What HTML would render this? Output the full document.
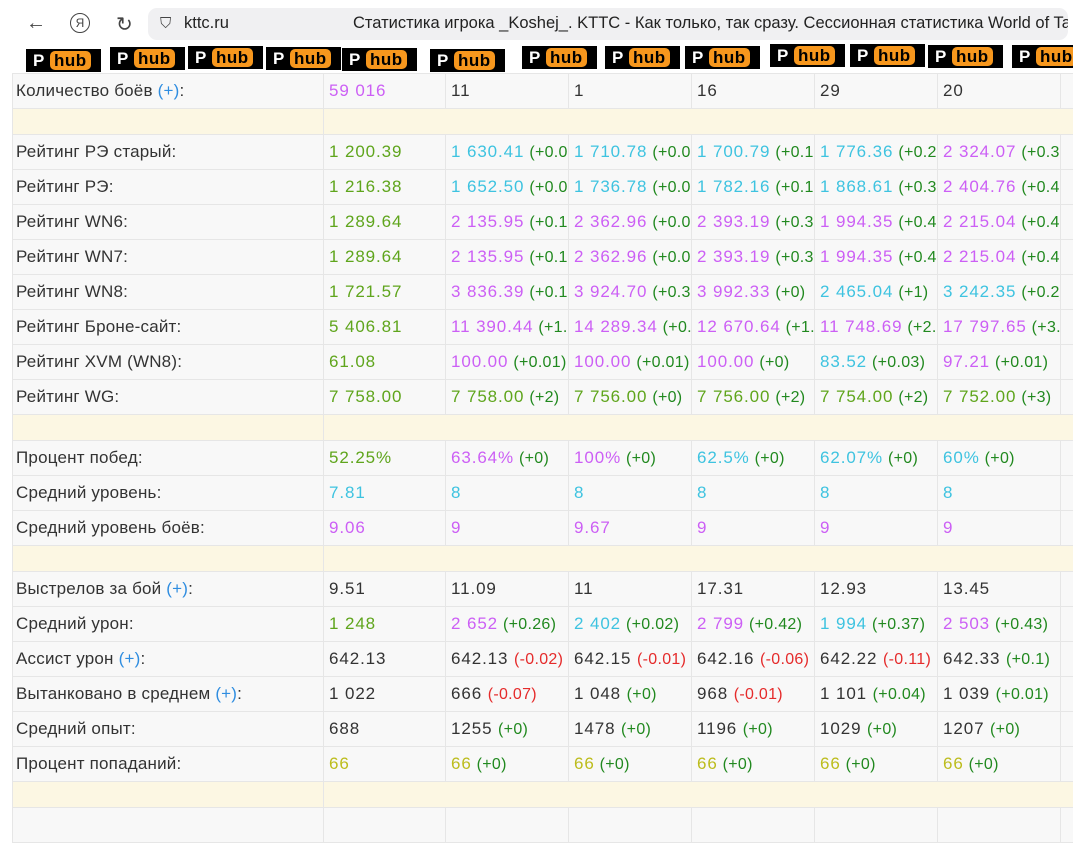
<!DOCTYPE html>
<html><head><meta charset="utf-8"><style>
body{margin:0;width:1073px;height:814px;overflow:hidden;background:#fff;font-family:"Liberation Sans",sans-serif;position:relative}
.bar{position:absolute;left:148px;top:8px;width:920px;height:32px;background:#f0f0f2;border-radius:9px}
.ic{position:absolute;top:12px;font-size:20px;color:#444}
.url{position:absolute;left:184px;top:14px;font-size:16.5px;color:#222}
.title{position:absolute;left:353px;top:14px;font-size:16.5px;color:#222;white-space:nowrap;width:715px;overflow:hidden}
.ph{position:absolute;background:#000;height:23px;width:75px;font:bold 17px "Liberation Sans",sans-serif;color:#fff}
.ph b{position:absolute;left:7px;top:2px}
.ph i{position:absolute;left:24px;top:2px;font-style:normal;background:#f7971d;color:#000;border-radius:5px;padding:0 4px;line-height:19px;letter-spacing:0.5px}
table{position:absolute;left:12px;top:73px;border-collapse:collapse;table-layout:fixed;width:1061px}
td{height:34px;border:1px solid #e6e6e6;padding:0 0 0 5px;font-size:17px;color:#333;white-space:nowrap;overflow:hidden;background:#f8f8f8;letter-spacing:0.2px}
td:first-child{padding-left:3px}
tr.e td{height:25px;background:#fcf7e3}
.g,.c,.p,.y{letter-spacing:0.9px}
td.n{letter-spacing:0.9px}
.g{color:#5fa51c}.c{color:#3ec3e0}.p{color:#cc5ff5}.y{color:#bcbc1c}.d{color:#21891f;font-size:16px;letter-spacing:0.3px}.r{color:#e52b2b;font-size:16px;letter-spacing:0.3px}.b{color:#2f8de0}
</style></head><body>
<div class="ic" style="left:26px">←</div>
<div class="ic" style="left:70px;top:13px;border:1.5px solid #444;border-radius:50%;width:18px;height:18px;line-height:18px;text-align:center;font-size:12px">Я</div>
<div class="ic" style="left:116px">↻</div>
<div class="bar"></div>
<div class="ic" style="left:160px;font-size:15px;top:15px">⛉</div>
<div class="url">kttc.ru</div>
<div class="title">Статистика игрока _Koshej_. KTTC - Как только, так сразу. Сессионная статистика World of Tanks</div>
<div class="ph" style="left:26px;top:49px"><b>P</b><i>hub</i></div>
<div class="ph" style="left:110px;top:47px"><b>P</b><i>hub</i></div>
<div class="ph" style="left:188px;top:46px"><b>P</b><i>hub</i></div>
<div class="ph" style="left:266px;top:47px"><b>P</b><i>hub</i></div>
<div class="ph" style="left:342px;top:48px"><b>P</b><i>hub</i></div>
<div class="ph" style="left:430px;top:49px"><b>P</b><i>hub</i></div>
<div class="ph" style="left:522px;top:46px"><b>P</b><i>hub</i></div>
<div class="ph" style="left:605px;top:46px"><b>P</b><i>hub</i></div>
<div class="ph" style="left:685px;top:46px"><b>P</b><i>hub</i></div>
<div class="ph" style="left:770px;top:44px"><b>P</b><i>hub</i></div>
<div class="ph" style="left:850px;top:44px"><b>P</b><i>hub</i></div>
<div class="ph" style="left:928px;top:45px"><b>P</b><i>hub</i></div>
<div class="ph" style="left:1012px;top:45px"><b>P</b><i>hub</i></div>
<table>
<colgroup><col style="width:311px"><col style="width:122px"><col style="width:123px"><col style="width:123px"><col style="width:123px"><col style="width:123px"><col style="width:123px"><col style="width:13px"></colgroup>
<tr><td>Количество боёв <span class="b">(+)</span>:</td><td class="p">59 016</td><td class="n">11</td><td class="n">1</td><td class="n">16</td><td class="n">29</td><td class="n">20</td><td></td></tr>
<tr class="e"><td></td><td colspan="7"></td></tr>
<tr><td>Рейтинг РЭ старый:</td><td class="g">1 200.39</td><td><span class="c">1 630.41</span> <span class="d">(+0.08)</span></td><td><span class="c">1 710.78</span> <span class="d">(+0.01)</span></td><td><span class="c">1 700.79</span> <span class="d">(+0.14)</span></td><td><span class="c">1 776.36</span> <span class="d">(+0.29)</span></td><td><span class="p">2 324.07</span> <span class="d">(+0.38)</span></td><td></td></tr>
<tr><td>Рейтинг РЭ:</td><td class="g">1 216.38</td><td><span class="c">1 652.50</span> <span class="d">(+0.09)</span></td><td><span class="c">1 736.78</span> <span class="d">(+0.01)</span></td><td><span class="c">1 782.16</span> <span class="d">(+0.17)</span></td><td><span class="c">1 868.61</span> <span class="d">(+0.33)</span></td><td><span class="p">2 404.76</span> <span class="d">(+0.41)</span></td><td></td></tr>
<tr><td>Рейтинг WN6:</td><td class="g">1 289.64</td><td><span class="p">2 135.95</span> <span class="d">(+0.17)</span></td><td><span class="p">2 362.96</span> <span class="d">(+0.03)</span></td><td><span class="p">2 393.19</span> <span class="d">(+0.32)</span></td><td><span class="p">1 994.35</span> <span class="d">(+0.41)</span></td><td><span class="p">2 215.04</span> <span class="d">(+0.44)</span></td><td></td></tr>
<tr><td>Рейтинг WN7:</td><td class="g">1 289.64</td><td><span class="p">2 135.95</span> <span class="d">(+0.17)</span></td><td><span class="p">2 362.96</span> <span class="d">(+0.03)</span></td><td><span class="p">2 393.19</span> <span class="d">(+0.32)</span></td><td><span class="p">1 994.35</span> <span class="d">(+0.41)</span></td><td><span class="p">2 215.04</span> <span class="d">(+0.44)</span></td><td></td></tr>
<tr><td>Рейтинг WN8:</td><td class="g">1 721.57</td><td><span class="p">3 836.39</span> <span class="d">(+0.18)</span></td><td><span class="p">3 924.70</span> <span class="d">(+0.39)</span></td><td><span class="p">3 992.33</span> <span class="d">(+0)</span></td><td><span class="c">2 465.04</span> <span class="d">(+1)</span></td><td><span class="c">3 242.35</span> <span class="d">(+0.2)</span></td><td></td></tr>
<tr><td>Рейтинг Броне-сайт:</td><td class="g">5 406.81</td><td><span class="p">11 390.44</span> <span class="d">(+1.5)</span></td><td><span class="p">14 289.34</span> <span class="d">(+0.1)</span></td><td><span class="p">12 670.64</span> <span class="d">(+1.1)</span></td><td><span class="p">11 748.69</span> <span class="d">(+2.1)</span></td><td><span class="p">17 797.65</span> <span class="d">(+3.1)</span></td><td></td></tr>
<tr><td>Рейтинг XVM (WN8):</td><td class="g">61.08</td><td><span class="p">100.00</span> <span class="d">(+0.01)</span></td><td><span class="p">100.00</span> <span class="d">(+0.01)</span></td><td><span class="p">100.00</span> <span class="d">(+0)</span></td><td><span class="c">83.52</span> <span class="d">(+0.03)</span></td><td><span class="p">97.21</span> <span class="d">(+0.01)</span></td><td></td></tr>
<tr><td>Рейтинг WG:</td><td class="g">7 758.00</td><td><span class="g">7 758.00</span> <span class="d">(+2)</span></td><td><span class="g">7 756.00</span> <span class="d">(+0)</span></td><td><span class="g">7 756.00</span> <span class="d">(+2)</span></td><td><span class="g">7 754.00</span> <span class="d">(+2)</span></td><td><span class="g">7 752.00</span> <span class="d">(+3)</span></td><td></td></tr>
<tr class="e"><td></td><td colspan="7"></td></tr>
<tr><td>Процент побед:</td><td class="g">52.25%</td><td><span class="p">63.64%</span> <span class="d">(+0)</span></td><td><span class="p">100%</span> <span class="d">(+0)</span></td><td><span class="c">62.5%</span> <span class="d">(+0)</span></td><td><span class="c">62.07%</span> <span class="d">(+0)</span></td><td><span class="c">60%</span> <span class="d">(+0)</span></td><td></td></tr>
<tr><td>Средний уровень:</td><td class="c">7.81</td><td class="c">8</td><td class="c">8</td><td class="c">8</td><td class="c">8</td><td class="c">8</td><td></td></tr>
<tr><td>Средний уровень боёв:</td><td class="p">9.06</td><td class="p">9</td><td class="p">9.67</td><td class="p">9</td><td class="p">9</td><td class="p">9</td><td></td></tr>
<tr class="e"><td></td><td colspan="7"></td></tr>
<tr><td>Выстрелов за бой <span class="b">(+)</span>:</td><td class="n">9.51</td><td class="n">11.09</td><td class="n">11</td><td class="n">17.31</td><td class="n">12.93</td><td class="n">13.45</td><td></td></tr>
<tr><td>Средний урон:</td><td class="g">1 248</td><td><span class="p">2 652</span> <span class="d">(+0.26)</span></td><td><span class="c">2 402</span> <span class="d">(+0.02)</span></td><td><span class="p">2 799</span> <span class="d">(+0.42)</span></td><td><span class="c">1 994</span> <span class="d">(+0.37)</span></td><td><span class="p">2 503</span> <span class="d">(+0.43)</span></td><td></td></tr>
<tr><td>Ассист урон <span class="b">(+)</span>:</td><td class="n">642.13</td><td class="n">642.13 <span class="r">(-0.02)</span></td><td class="n">642.15 <span class="r">(-0.01)</span></td><td class="n">642.16 <span class="r">(-0.06)</span></td><td class="n">642.22 <span class="r">(-0.11)</span></td><td class="n">642.33 <span class="d">(+0.1)</span></td><td></td></tr>
<tr><td>Вытанковано в среднем <span class="b">(+)</span>:</td><td class="n">1 022</td><td class="n">666 <span class="r">(-0.07)</span></td><td class="n">1 048 <span class="d">(+0)</span></td><td class="n">968 <span class="r">(-0.01)</span></td><td class="n">1 101 <span class="d">(+0.04)</span></td><td class="n">1 039 <span class="d">(+0.01)</span></td><td></td></tr>
<tr><td>Средний опыт:</td><td class="n">688</td><td class="n">1255 <span class="d">(+0)</span></td><td class="n">1478 <span class="d">(+0)</span></td><td class="n">1196 <span class="d">(+0)</span></td><td class="n">1029 <span class="d">(+0)</span></td><td class="n">1207 <span class="d">(+0)</span></td><td></td></tr>
<tr><td>Процент попаданий:</td><td class="y">66</td><td><span class="y">66</span> <span class="d">(+0)</span></td><td><span class="y">66</span> <span class="d">(+0)</span></td><td><span class="y">66</span> <span class="d">(+0)</span></td><td><span class="y">66</span> <span class="d">(+0)</span></td><td><span class="y">66</span> <span class="d">(+0)</span></td><td></td></tr>
<tr class="e"><td></td><td colspan="7"></td></tr>
<tr><td></td><td></td><td></td><td></td><td></td><td></td><td></td><td></td></tr>
</table>
</body></html>
